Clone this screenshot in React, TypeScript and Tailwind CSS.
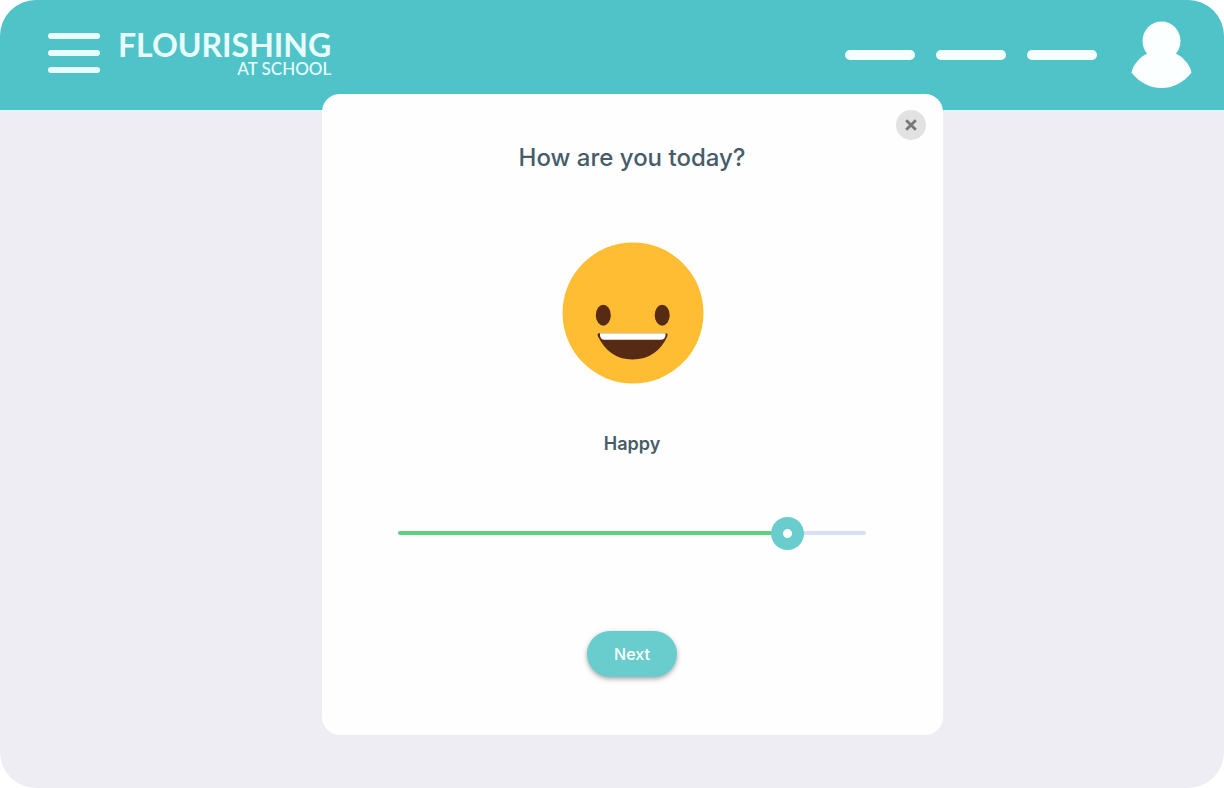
import { useState } from "react";
import type { CSSProperties } from "react";

const NAV_LINKS = ["Home", "Activities", "Progress"];
const MAX_MOOD = 7;

function MenuButton() {
  return (
    <button type="button" aria-label="Menu" className="flex w-[52px] flex-col gap-[11px]">
      <span className="h-[6px] rounded-full bg-[#e9ffff]" />
      <span className="h-[6px] rounded-full bg-[#e9ffff]" />
      <span className="h-[6px] rounded-full bg-[#e9ffff]" />
    </button>
  );
}

function Header() {
  return (
    <header className="border-b-2 border-[#dff5f8]">
      <div className="flex h-[110px] items-center justify-between bg-[#4fc3c7] pr-8 pb-1 pl-12">
        <div className="flex items-center gap-[18px]">
          <MenuButton />
          <a href="#" className="flex flex-col items-end pt-1 font-['Lato',sans-serif] text-[#e9ffff]">
            <span className="text-[32px] leading-7 font-bold">FLOURISHING</span>
            <span className="text-[17px] leading-5 font-medium">AT SCHOOL</span>
          </a>
        </div>
        <div className="flex items-center gap-[34px] pt-1">
          <nav className="flex gap-[21px]">
            {NAV_LINKS.map((name) => (
              <a key={name} href="#" aria-label={name} className="h-[10px] w-[70px] rounded-full bg-[#f6ffff]" />
            ))}
          </nav>
          <button type="button" aria-label="Account">
            <svg width="61" height="68" viewBox="0 0 61 68" fill="#fbffff">
              <ellipse cx="30.5" cy="20" rx="19" ry="19.500" />
              <path d="M17.500 32C9 35.500 2.500 43 .5 51.500C8 61 18 67 30.500 67S53 61 60.500 51.500C58.500 43 52 35.500 43.500 32Z" />
            </svg>
          </button>
        </div>
      </div>
    </header>
  );
}

function HappyFace() {
  return (
    <svg width="144" height="142" viewBox="-2 0 144 142" role="img" aria-label="Happy">
      <circle cx="71" cy="71" r="70.500" fill="#ffbd34" />
      <ellipse cx="41.300" cy="73.200" rx="7.500" ry="10.500" fill="#572a13" />
      <ellipse cx="100.200" cy="73.200" rx="7.500" ry="10.500" fill="#572a13" />
      <path
        d="M37.500 91.300H103.500Q106.500 91.300 105.200 94.500C99 108.500 87 117.500 70.500 117.500S43 108.500 36 94.500Q34.500 91.300 37.500 91.300Z"
        fill="#572a13"
      />
      <path d="M38 91.200H103.500V93.500Q103 97.700 98.500 97.700H42.500Q38.500 97.700 38 93.500Z" fill="#fff" />
    </svg>
  );
}

function MoodSlider() {
  const [mood, setMood] = useState(6);
  const ratio = mood / MAX_MOOD;
  const style = { "--fill": `calc(16px + (100% - 33px) * ${ratio})` } as CSSProperties;
  return (
    <input
      type="range"
      aria-label="Mood"
      min={0}
      max={MAX_MOOD}
      value={mood}
      onChange={(e) => setMood(Number(e.target.value))}
      style={style}
      className="h-[34px] w-full cursor-pointer appearance-none bg-transparent [&::-webkit-slider-runnable-track]:h-1 [&::-webkit-slider-runnable-track]:rounded-full [&::-webkit-slider-runnable-track]:bg-[linear-gradient(to_right,#5ccf80_var(--fill),#d9dff3_var(--fill))] [&::-webkit-slider-thumb]:mt-[-14px] [&::-webkit-slider-thumb]:size-[33px] [&::-webkit-slider-thumb]:appearance-none [&::-webkit-slider-thumb]:rounded-full [&::-webkit-slider-thumb]:bg-[radial-gradient(circle,#fff_4px,#68cdcc_5px)]"
    />
  );
}

function MoodDialog() {
  return (
    <section
      role="dialog"
      aria-labelledby="mood-title"
      className="relative flex w-full max-w-[621px] flex-col items-center rounded-[18px] bg-[#fefefe] pt-12 pr-[77px] pb-[58px] pl-[76px] text-[#465c69]"
    >
      <button
        type="button"
        aria-label="Close"
        className="absolute top-4 right-[17px] flex size-[30px] items-center justify-center rounded-full bg-[#e2e2e2]"
      >
        <svg width="12" height="12" viewBox="0 0 12 12" stroke="#777" strokeWidth="2.800">
          <path d="M1.200 1.200L10.800 10.800M10.800 1.200L1.200 10.800" />
        </svg>
      </button>
      <h1 id="mood-title" className="text-2xl leading-8 font-medium">
        How are you today?
      </h1>
      <div className="mt-[68px]">
        <HappyFace />
      </div>
      <p className="mt-12 text-lg leading-6 font-semibold">Happy</p>
      <div className="mt-[60px] flex w-full">
        <MoodSlider />
      </div>
      <button
        type="button"
        className="mt-[81px] h-[46px] w-[90px] rounded-full bg-[#68cdcc] text-base font-medium text-white shadow-[0_2px_5px_rgba(0,0,0,0.35)]"
      >
        Next
      </button>
    </section>
  );
}

export default function App() {
  return (
    <div className="min-h-screen bg-white font-['Inter',sans-serif]">
      <div className="min-h-screen overflow-hidden rounded-[36px] bg-[#eeedf4]">
        <Header />
        <main className="-mt-[18px] flex justify-center pb-[53px] pl-[41px]">
          <MoodDialog />
        </main>
      </div>
    </div>
  );
}
